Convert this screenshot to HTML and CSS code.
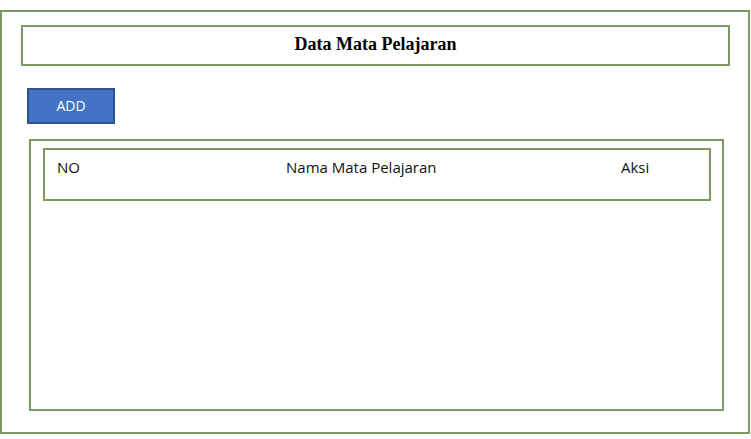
FILE: index.html
```html
<!DOCTYPE html>
<html>
<head>
<meta charset="utf-8">
<link rel="stylesheet" href="styles.css">
</head>
<body>
<div class="frame">
  <div class="title">Data Mata Pelajaran</div>
  <button class="add-btn">ADD</button>
  <div class="table-box">
    <div class="table-head">
      <span class="col col-no">NO</span>
      <span class="col col-name">Nama Mata Pelajaran</span>
      <span class="col col-aksi">Aksi</span>
    </div>
  </div>
</div>
</body>
</html>
```
FILE: styles.css
```css
html, body {
  margin: 0;
  padding: 0;
  background: #ffffff;
}

body {
  padding-top: 10px;
  font-family: "Open Sans", "Liberation Sans", sans-serif;
}

.frame {
  box-sizing: border-box;
  width: 750px;
  height: 424px;
  border: 2px solid #7a9b62;
  padding: 13px 18px 21px 19px;
  display: flex;
  flex-direction: column;
}

.title {
  box-sizing: border-box;
  height: 41px;
  border: 2px solid #7a9b62;
  padding-top: 7px;
  text-align: center;
  font-family: "Liberation Serif", "Times New Roman", serif;
  font-weight: bold;
  font-size: 18px;
  line-height: 20px;
  color: #000;
}

.add-btn {
  box-sizing: border-box;
  align-self: flex-start;
  margin: 22px 0 0 6px;
  width: 88px;
  height: 36px;
  background: #4472c4;
  border: 2px solid #2f528f;
  border-radius: 0;
  color: #ffffff;
  font-family: "Open Sans", "Liberation Sans", sans-serif;
  font-size: 14px;
  line-height: 20px;
  padding: 0;
  display: flex;
  align-items: center;
  justify-content: center;
}

.table-box {
  box-sizing: border-box;
  flex: 1;
  margin: 15px 6px 0 8px;
  border: 2px solid #7a9b62;
  padding: 7px 11px 0 12px;
}

.table-head {
  box-sizing: border-box;
  height: 53px;
  border: 2px solid #7a9b62;
  padding: 7px 0 0 12px;
  display: grid;
  grid-template-columns: 229px 335px auto;
  align-items: start;
  font-size: 15px;
  line-height: 20px;
  color: #111;
}
```
